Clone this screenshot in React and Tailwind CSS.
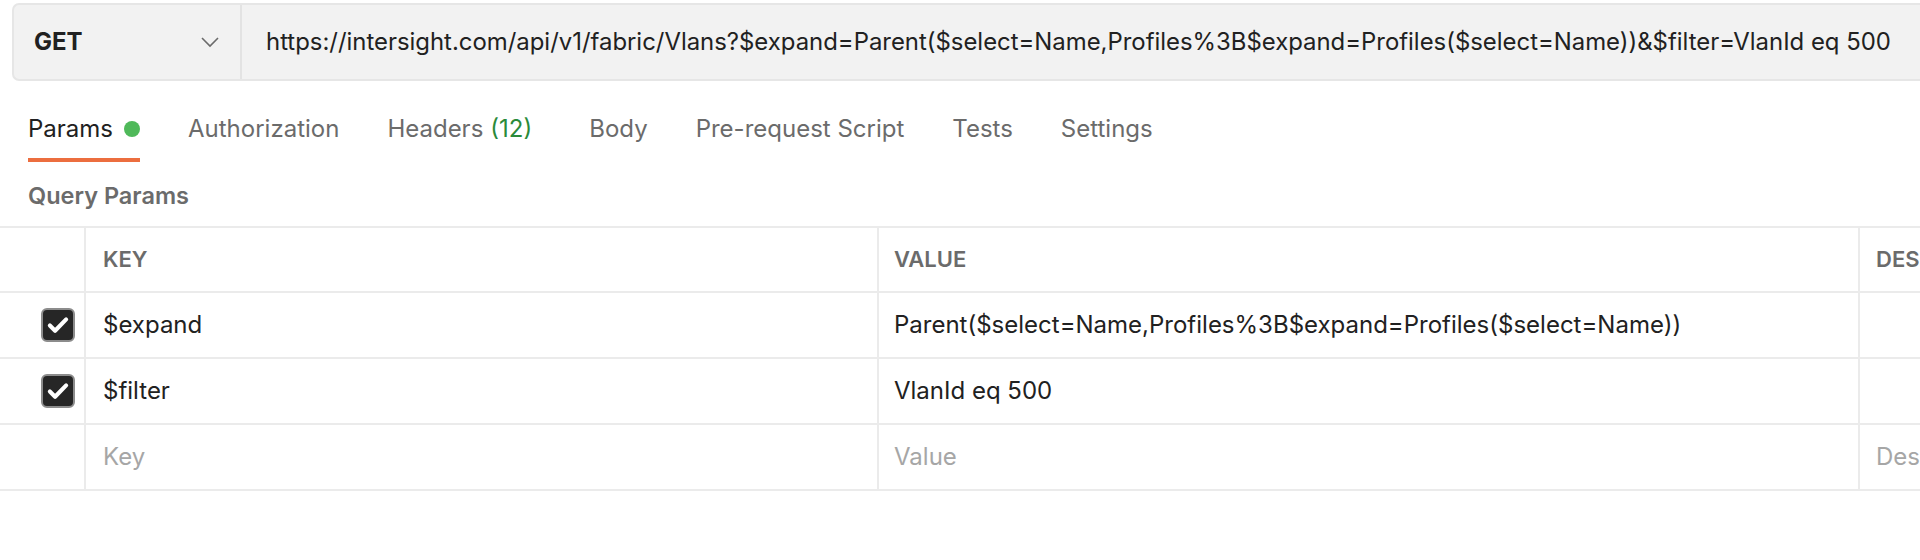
import React from 'react';

const tabs = [
  { label: 'Authorization' },
  { label: 'Headers', count: '(12)' },
  { label: 'Body' },
  { label: 'Pre-request Script' },
  { label: 'Tests' },
  { label: 'Settings' },
];

const params = [
  { key: '$expand', value: 'Parent($select=Name,Profiles%3B$expand=Profiles($select=Name))' },
  { key: '$filter', value: 'VlanId eq 500' },
];

function Checkbox() {
  return (
    <div className="w-[34px] h-[34px] rounded-[6px] bg-[#262626] border-2 border-[#8c8c8c] flex items-center justify-center">
      <svg width="26" height="26" viewBox="0 0 24 24" fill="none">
        <path d="M4.5 12.5l4.8 4.8L19.5 6.8" stroke="white" strokeWidth="3.8" strokeLinecap="round" strokeLinejoin="round" />
      </svg>
    </div>
  );
}

function Row({ first, children, header }) {
  return (
    <div className={`flex ${header ? 'h-[65px]' : 'h-[66px]'} border-b-2 border-[#ebebeb]`}>
      <div className="w-[84px] shrink-0 flex items-center justify-end pr-[9px]">{first}</div>
      {children}
    </div>
  );
}

export default function App() {
  return (
    <div className="w-[1920px] h-[560px] bg-white overflow-hidden" style={{ fontFamily: 'Inter, "Noto Sans", sans-serif' }}>
      {/* barre url */}
      <div className="pl-[12px] pt-[3px]">
        <div className="h-[78px] flex bg-[#f2f2f2] border-y-2 border-l-2 border-[#e6e6e6] rounded-l-[7px]">
          <div className="w-[228px] shrink-0 flex items-center justify-between pl-[20px] pr-[20px] border-r-2 border-[#e3e3e3]">
            <span className="text-[24px] font-bold text-[#212121]">GET</span>
            <svg width="20" height="12" viewBox="0 0 20 12" fill="none">
              <path d="M2 2l8 8 8-8" stroke="#6b6b6b" strokeWidth="1.6" />
            </svg>
          </div>
          <div className="flex items-center pl-[24px] text-[23.9px] text-[#212121] whitespace-nowrap">
            https://intersight.com/api/v1/fabric/Vlans?$expand=Parent($select=Name,Profiles%3B$expand=Profiles($select=Name))&amp;$filter=VlanId eq 500
          </div>
        </div>
      </div>

      {/* onglets */}
      <div className="flex items-start gap-[48px] pl-[28px] pt-[32px] text-[24px] leading-[32px]">
        <div className="flex flex-col">
          <div className="flex items-center gap-[11px] text-[#212121]">
            <span>Params</span>
            <span className="w-[16px] h-[16px] rounded-full bg-[#4fb95a]"></span>
          </div>
          <div className="h-[4px] mt-[13px] bg-[#ec6e3f]"></div>
        </div>
        {tabs.map((t) => (
          <div key={t.label} className={`text-[#6b6b6b] ${t.count ? 'mr-[9px]' : ''}`}>
            {t.label}
            {t.count && <span className="text-[#2a8a3a] ml-[7px]">{t.count}</span>}
          </div>
        ))}
      </div>

      <div className="pl-[28px] pt-[18px] pb-[14px] text-[23.5px] leading-[32px] font-semibold text-[#6b6b6b]">Query Params</div>

      {/* tableau */}
      <div className="border-t-2 border-[#ebebeb] text-[24px]">
        <Row first={null} header>
          <div className="w-[793px] shrink-0 border-l-2 border-[#ebebeb] flex items-center pl-[17px] text-[22px] font-semibold text-[#6b6b6b]">KEY</div>
          <div className="w-[981px] shrink-0 border-l-2 border-[#ebebeb] flex items-center pl-[15px] text-[22px] font-semibold text-[#6b6b6b]">VALUE</div>
          <div className="flex-1 border-l-2 border-[#ebebeb] flex items-center pl-[16px] text-[22px] font-semibold text-[#6b6b6b] whitespace-nowrap">DESCRIPTION</div>
        </Row>
        {params.map((p) => (
          <Row key={p.key} first={<Checkbox />}>
            <div className="w-[793px] shrink-0 border-l-2 border-[#ebebeb] flex items-center pl-[17px] text-[#212121]">{p.key}</div>
            <div className="w-[981px] shrink-0 border-l-2 border-[#ebebeb] flex items-center pl-[15px] text-[#212121] whitespace-nowrap">{p.value}</div>
            <div className="flex-1 border-l-2 border-[#ebebeb]"></div>
          </Row>
        ))}
        <Row first={null}>
          <div className="w-[793px] shrink-0 border-l-2 border-[#ebebeb] flex items-center pl-[17px] text-[#a6a6a6]">Key</div>
          <div className="w-[981px] shrink-0 border-l-2 border-[#ebebeb] flex items-center pl-[15px] text-[#a6a6a6]">Value</div>
          <div className="flex-1 border-l-2 border-[#ebebeb] flex items-center pl-[16px] text-[#a6a6a6] whitespace-nowrap">Description</div>
        </Row>
      </div>
    </div>
  );
}
